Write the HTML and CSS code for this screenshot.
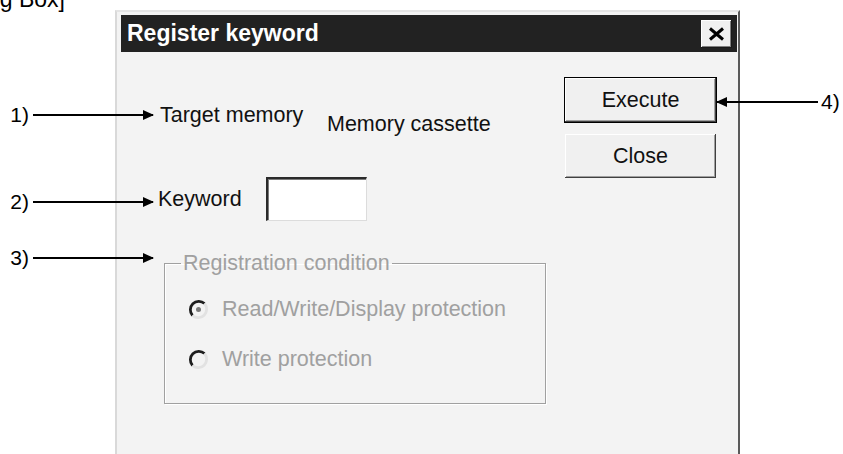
FILE: index.html
```html
<!DOCTYPE html>
<html lang="en">
<head>
    <meta charset="UTF-8">
    <meta name="viewport" content="width=device-width, initial-scale=1.0">
    <title>Register keyword</title>
    <link rel="stylesheet" href="styles.css">
</head>
<body>
<div class="figure">
    <div class="caption">[Dialog Box]</div>

    <div class="dialog">
        <div class="titlebar">
            <span class="title">Register keyword</span>
            <button class="close-x" aria-label="Close">
                <svg width="17" height="14" viewBox="0 0 17 14"><path d="M2 1.5L15 12.5M15 1.5L2 12.5" stroke="#000" stroke-width="3" fill="none"/></svg>
            </button>
        </div>

        <div class="dlg-body">
            <div class="main">
                <div class="row target">
                    <span class="label">Target memory</span>
                    <span class="value">Memory cassette</span>
                </div>
                <div class="row keyword">
                    <label class="label" for="kw">Keyword</label>
                    <input class="textbox" id="kw" type="text">
                </div>
                <fieldset class="group" disabled>
                    <legend>Registration condition</legend>
                    <div class="group-body">
                        <div class="radio">
                            <svg width="21" height="21" viewBox="0 0 21 21">
                                <circle cx="10.5" cy="10.5" r="8.5" fill="#f3f3f3"/>
                                <path d="M16.5 4.5A8.5 8.5 0 0 0 4.5 16.5" stroke="#1e1e1e" stroke-width="2.8" fill="none"/>
                                <path d="M4.5 16.5A8.5 8.5 0 0 0 16.5 4.5" stroke="#e2e2e2" stroke-width="2.8" fill="none"/>
                                <circle cx="10.5" cy="10.5" r="2.5" fill="#7a7a7a"/>
                            </svg>
                            <span>Read/Write/Display protection</span>
                        </div>
                        <div class="radio second">
                            <svg width="21" height="21" viewBox="0 0 21 21">
                                <circle cx="10.5" cy="10.5" r="8.5" fill="#f3f3f3"/>
                                <path d="M16.5 4.5A8.5 8.5 0 0 0 4.5 16.5" stroke="#1e1e1e" stroke-width="2.8" fill="none"/>
                                <path d="M4.5 16.5A8.5 8.5 0 0 0 16.5 4.5" stroke="#e2e2e2" stroke-width="2.8" fill="none"/>
                            </svg>
                            <span>Write protection</span>
                        </div>
                    </div>
                </fieldset>
            </div>

            <div class="buttons">
                <button class="btn default">Execute</button>
                <button class="btn">Close</button>
            </div>
        </div>
    </div>

    <!-- callouts -->
    <div class="callout c1"><span class="num">1)</span><span class="arrow"></span></div>
    <div class="callout c2"><span class="num">2)</span><span class="arrow"></span></div>
    <div class="callout c3"><span class="num">3)</span><span class="arrow"></span></div>
    <div class="callout c4"><span class="arrow left"></span><span class="num">4)</span></div>
</div>
</body>
</html>
```

FILE: styles.css
```css
html, body { margin: 0; height: 100%; overflow: hidden; background: #fff; }
body { font-family: "Liberation Sans", Arial, sans-serif; color: #111; }

.figure { position: relative; display: flow-root; width: 843px; height: 454px; overflow: hidden; }

.caption {
    font-size: 23px;
    line-height: 20px;
    height: 10px;
    margin: -11px 0 0 -59px;
    white-space: nowrap;
    color: #000;
}

/* dialog window */
.dialog {
    width: 625px;
    height: 444px;
    margin: 11px 0 0 115px;
    box-sizing: border-box;
    background: #f3f3f3;
    border-left: 2px solid #d9d9d9;
    border-top: 2px solid #e4e4e4;
    border-right: 2px solid #5a5a5a;
    padding: 3px 1px 0 4px;
}

.titlebar {
    height: 37px;
    background: #222;
    color: #fff;
    display: flex;
    align-items: center;
    justify-content: space-between;
    padding: 0 5px 0 6px;
}
.title { font-weight: bold; font-size: 23px; }

.close-x {
    width: 31px;
    height: 28px;
    padding: 0;
    border: 0;
    background: #f0f0f0;
    box-shadow: inset -1px -1px #1a1a1a, inset 1px 1px #fff, inset -2px -2px #808080;
    display: flex;
    align-items: center;
    justify-content: center;
}

.dlg-body {
    display: flex;
    justify-content: space-between;
    padding: 0 20px 0 37px;
}

.main { padding-top: 51px; }

.row { display: flex; font-size: 21.5px; line-height: 24px; }
.target .label { width: 167px; margin-left: 2px; }
.target .value { padding-top: 9px; }

.keyword { margin-top: 41px; align-items: center; }
.keyword .label { width: 108px; }

.textbox {
    width: 101px;
    height: 44px;
    box-sizing: border-box;
    margin: 0;
    padding: 0 4px;
    font: inherit;
    background: #fff;
    border-style: solid;
    border-width: 2px 1px 1px 2px;
    border-color: #2a2a2a #dcdcdc #dcdcdc #2a2a2a;
    box-shadow: inset 1px 1px #7a7a7a;
    outline: none;
}

/* registration condition group */
.group {
    margin: 30px 0 0 6px;
    padding: 0;
    width: 382px;
    box-sizing: border-box;
    min-inline-size: 0;
    border: 1px solid #a0a0a0;
    box-shadow: inset 1px 1px #fff, 1px 1px #fff;
    color: #a0a0a0;
    font-size: 21.5px;
    line-height: 24px;
}
.group legend { margin-left: 16px; padding: 0 2px; }
.group-body { padding: 22px 0 32px 23px; }

.radio { display: flex; align-items: center; height: 24px; }
.radio svg { margin-right: 13px; flex: none; }
.radio.second { margin-top: 26px; }

.buttons {
    display: flex;
    flex-direction: column;
    align-items: center;
    padding-top: 25px;
}
.btn {
    width: 151px;
    height: 44px;
    padding: 0;
    border: 0;
    background: #f0f0f0;
    color: #111;
    font-family: "Liberation Sans", Arial, sans-serif;
    font-size: 21.5px;
    box-shadow: inset -1px -1px #404040, inset 1px 1px #fff, inset -2px -2px #a0a0a0;
}
.btn + .btn { margin-top: 11px; }
.btn.default { width: 153px; height: 46px; border: 1px solid #000; }

/* callout arrows */
.callout {
    position: absolute;
    display: flex;
    align-items: center;
    font-size: 21px;
    line-height: 24px;
    color: #000;
}
.callout .num { width: 29px; text-align: right; }
.callout .arrow { position: relative; width: 120px; height: 2px; background: #000; margin-left: 4px; }
.callout .arrow::after {
    content: "";
    position: absolute;
    right: -1px;
    top: -4px;
    border-left: 11px solid #000;
    border-top: 5px solid transparent;
    border-bottom: 5px solid transparent;
}
.callout .arrow.left { width: 101px; margin: 0 3px 0 0; }
.callout .arrow.left::after {
    right: auto;
    left: -1px;
    border-left: 0;
    border-right: 11px solid #000;
}
.callout .num:last-child { width: auto; text-align: left; }

.c1 { left: 0; top: 103px; }
.c2 { left: 0; top: 190px; }
.c3 { left: 0; top: 246px; }
.c4 { left: 717px; top: 90px; }
```
